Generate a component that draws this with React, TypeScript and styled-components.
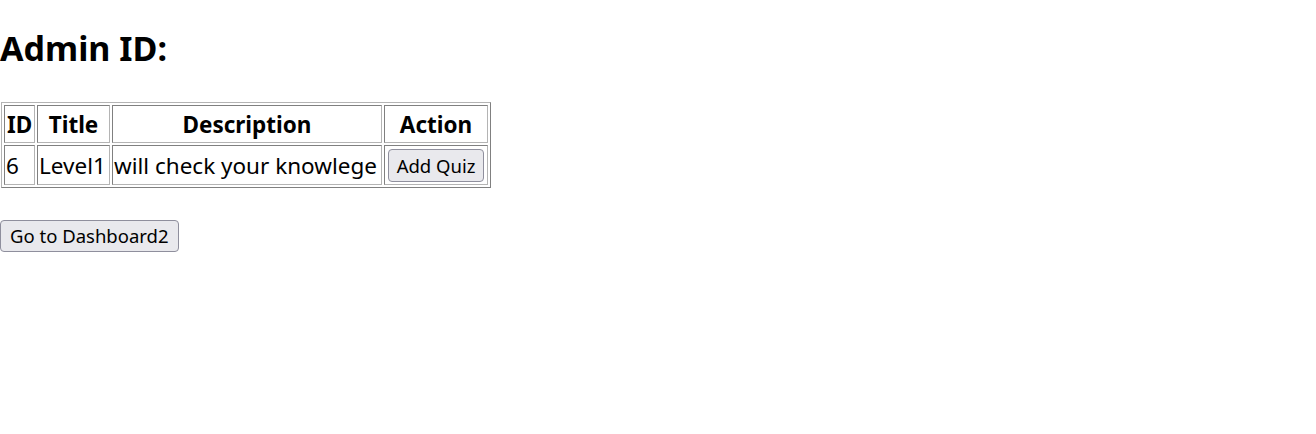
import React from 'react'
import styled, { createGlobalStyle } from 'styled-components'

const GlobalStyle = createGlobalStyle`
  html, body {
    margin: 0;
    padding: 0;
    background: #fff;
  }
  body {
    font-family: 'Noto Sans', 'Open Sans', sans-serif;
    color: #000;
  }
`

const Page = styled.div`
  display: flex;
  flex-direction: column;
  align-items: flex-start;
`

const Heading = styled.h1`
  font-size: 34px;
  line-height: 44px;
  font-weight: 700;
  margin: 26px 0 32px;
`

const Table = styled.table`
  border-collapse: separate;
  border-spacing: 2px;
  margin-left: 1px;
  border: 1px solid;
  border-color: #b4b4b4 #808080 #808080 #b4b4b4;
  font-size: 22.5px;
`

const HeadCell = styled.th<{ $w: number }>`
  width: ${({ $w }) => $w}px;
  box-sizing: border-box;
  padding: 1px;
  height: 38px;
  font-weight: 700;
  text-align: center;
  white-space: nowrap;
  border: 1px solid;
  border-color: #808080 #b4b4b4 #b4b4b4 #808080;
`

const Cell = styled.td<{ $center?: boolean }>`
  padding: 1px;
  height: 40px;
  box-sizing: border-box;
  white-space: nowrap;
  text-align: ${({ $center }) => ($center ? 'center' : 'left')};
  border: 1px solid;
  border-color: #808080 #b4b4b4 #b4b4b4 #808080;
`

const Button = styled.button`
  font-family: inherit;
  font-size: 18.5px;
  line-height: 25px;
  color: #000;
  background: #e9e9ed;
  border: 1px solid #8f8f9d;
  border-radius: 4px;
  padding: 3px 8px;
  cursor: pointer;
  &:hover {
    background: #d0d0d7;
  }
`

const DashButton = styled(Button)`
  margin-top: 32px;
  line-height: 26px;
  padding: 2px 9px;
`

const quizzes = [{ id: 6, title: 'Level1', description: 'will check your knowlege' }]

export default function App() {
  return (
    <Page>
      <GlobalStyle />
      <Heading>Admin ID:</Heading>
      <Table>
        <thead>
          <tr>
            <HeadCell $w={31}>ID</HeadCell>
            <HeadCell $w={73}>Title</HeadCell>
            <HeadCell $w={270}>Description</HeadCell>
            <HeadCell $w={104}>Action</HeadCell>
          </tr>
        </thead>
        <tbody>
          {quizzes.map((q) => (
            <tr key={q.id}>
              <Cell>{q.id}</Cell>
              <Cell>{q.title}</Cell>
              <Cell>{q.description}</Cell>
              <Cell $center>
                <Button>Add Quiz</Button>
              </Cell>
            </tr>
          ))}
        </tbody>
      </Table>
      <DashButton>Go to Dashboard2</DashButton>
    </Page>
  )
}
